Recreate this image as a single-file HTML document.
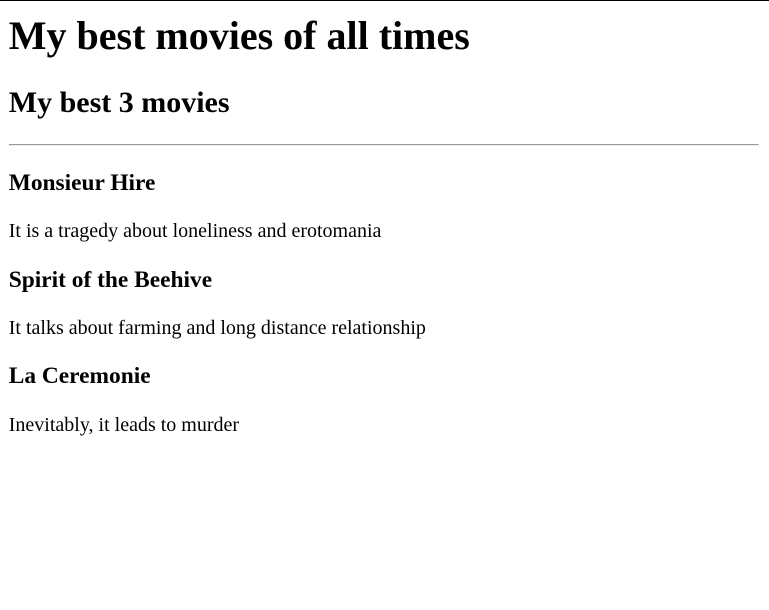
<!DOCTYPE html>
<html><head><meta charset="utf-8"><style>
html{margin:0;padding:0}
body{margin:0;font-family:"Liberation Serif",serif;color:#000;background:#fff}
.wrap{zoom:1.25;margin:9.4px 8px 8px 7px}
.wrap h1{margin-top:0}
.top{position:absolute;left:0;top:0;width:100%;height:1px;background:#000}
</style></head><body>
<div class="top"></div>
<div class="wrap">
<h1>My best movies of all times</h1>
<h2>My best 3 movies</h2>
<hr>
<h3>Monsieur Hire</h3>
<p>It is a tragedy about loneliness and erotomania</p>
<h3>Spirit of the Beehive</h3>
<p>It talks about farming and long distance relationship</p>
<h3>La Ceremonie</h3>
<p>Inevitably, it leads to murder</p>
</div>
</body></html>
